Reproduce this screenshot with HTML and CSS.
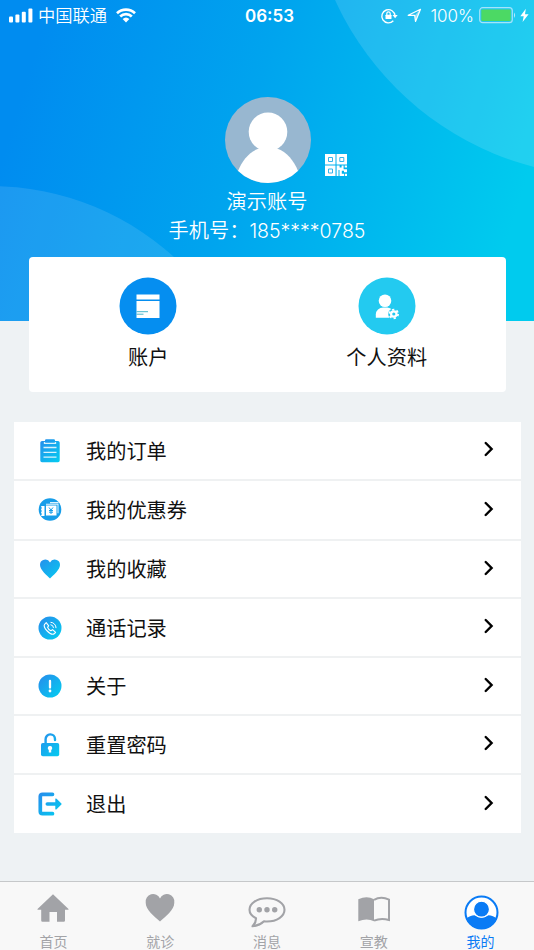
FILE: index.html
```html
<!DOCTYPE html>
<html lang="zh-CN">
<head>
    <meta charset="UTF-8">
    <meta name="viewport" content="width=device-width, initial-scale=1.0">
    <title>我的</title>
    <link rel="stylesheet" href="styles.css">
</head>
<body>
    <!-- shared icon gradient -->
    <svg class="defs" width="0" height="0">
        <defs>
            <linearGradient id="blue" x1="0" y1="0" x2="24" y2="24" gradientUnits="userSpaceOnUse">
                <stop offset="0.1" stop-color="#2590ec"/>
                <stop offset="0.9" stop-color="#05caf0"/>
            </linearGradient>
        </defs>
    </svg>

    <header class="header">
        <svg class="header-bg" viewBox="0 0 534 321">
            <circle cx="609.5" cy="-125" r="301.6"/>
            <circle class="dim" cx="-10" cy="460" r="274"/>
        </svg>

        <div class="status">
            <div class="status-left">
                <svg width="24" height="15" viewBox="0 0 24 15" fill="#fff">
                    <rect x="0" y="8.5" width="4" height="6" rx="1"/>
                    <rect x="6.4" y="6.5" width="4" height="8" rx="1"/>
                    <rect x="12.8" y="3.8" width="4" height="10.7" rx="1"/>
                    <rect x="19.4" y="0.6" width="4" height="13.9" rx="1"/>
                </svg>
                <span class="carrier">中国联通</span>
                <svg width="20" height="15" viewBox="0 0 20 15">
                    <path d="M1 5.2a13 13 0 0 1 18 0M4.2 8.5a8.3 8.3 0 0 1 11.6 0" fill="none" stroke="#fff" stroke-width="2.7"/>
                    <path d="M6.6 11a5 5 0 0 1 6.8 0L10 14.5z" fill="#fff"/>
                </svg>
            </div>
            <div class="time">06:53</div>
            <div class="status-right">
                <svg width="17" height="16" viewBox="0 0 17 16">
                    <path d="M12.3 12.7a6.6 6.6 0 1 1 1.7-5" fill="none" stroke="#fff" stroke-width="1.4"/>
                    <path d="M11.5 7h5.2l-2.6 3.2z" fill="#fff"/>
                    <rect x="4.5" y="6.7" width="6" height="4.3" rx="0.6" fill="#fff"/>
                    <path d="M5.8 7V5.6a1.7 1.7 0 0 1 3.4 0V7" fill="none" stroke="#fff" stroke-width="1.2"/>
                </svg>
                <svg class="arrow" width="15" height="15" viewBox="0 0 15 15">
                    <path d="M1.2 7.3L13.5 1.3L8.5 13.5L7.7 7.4z" fill="none" stroke="#fff" stroke-width="1.2" stroke-linejoin="round"/>
                    <path d="M13.5 1.3L7.7 7.4L8.5 13.5z" fill="#fff" opacity="0.5"/>
                </svg>
                <span class="percent">100%</span>
                <svg class="battery" width="38" height="17" viewBox="0 0 38 17">
                    <rect x="0.7" y="0.7" width="32.6" height="15" rx="3" fill="none" stroke="#a5e4fa" stroke-width="1.2"/>
                    <rect x="2.3" y="2.4" width="29.4" height="11.6" rx="1" fill="#4cd964"/>
                    <path d="M35 5.5q2.2 2.7 0 5.4z" fill="#b5e9fb"/>
                </svg>
                <svg width="9" height="15" viewBox="0 0 9 15"><path d="M5.8 0.8L0.3 8.2h3.4L2.6 14L8.6 6.3H5z" fill="#fff"/></svg>
            </div>
        </div>

        <div class="profile">
            <svg class="avatar" viewBox="0 0 86 86">
                <clipPath id="face"><circle cx="43" cy="43" r="43"/></clipPath>
                <g clip-path="url(#face)">
                    <rect width="86" height="86" fill="#98b7d0"/>
                    <circle cx="43" cy="34.8" r="19.3" fill="#fff"/>
                    <path d="M34 51.5C24 55 17 64 13 74V86H73V74C69 64 62 55 52 51.5z" fill="#fff"/>
                </g>
            </svg>
            <svg class="qr" viewBox="0 0 22 22">
                <path d="M0 0h10.5v10.5H0zM11.5 0H22v10.5H11.5zM0 11.5h10.5V22H0z" fill="#fff"/>
                <path d="M3.5 3.5h4v4h-4zM14.8 3.5h4v4h-4zM3.5 15h4v4h-4z" fill="#fff" stroke="#35b5ec" stroke-width="1"/>
                <path d="M11.6 11.6h3v2h2v-2h2v3.6H22v3h-3v-1.5h-2.2v3H19V22h-4.5v-6h-1V22h-1.9z" fill="#fff"/>
                <path d="M19.7 11.6H22v2h-2.3zM19.8 19.8H22V22h-2.2z" fill="#fff"/>
            </svg>
            <div class="name">演示账号</div>
            <div class="phone">手机号：<span>185****0785</span></div>
        </div>
    </header>

    <section class="card">
        <a class="card-item">
            <svg width="58" height="58" viewBox="0 0 58 58">
                <circle cx="29" cy="29" r="28.5" fill="#058ef0"/>
                <path d="M17.5 17.6h23v5h-23zM17.5 24h23v17h-23z" fill="#fff"/>
                <path d="M17.5 34.7h11.5M17.5 37.2h7" stroke="#48b5c9" stroke-width="1"/>
            </svg>
            <span>账户</span>
        </a>
        <a class="card-item">
            <svg width="58" height="58" viewBox="0 0 58 58">
                <circle cx="29" cy="29" r="28.5" fill="#23caf0"/>
                <circle cx="27" cy="23.7" r="6.3" fill="#fff"/>
                <path d="M17.8 40.8v-3.3a7.5 7 0 0 1 7.5-7h4a7.5 7 0 0 1 5 2.2l-2.5 8.1z" fill="#fff"/>
                <circle cx="35.8" cy="37" r="5.6" fill="#23caf0"/>
                <circle cx="35.8" cy="37" r="4.3" fill="none" stroke="#fff" stroke-width="1.8" stroke-dasharray="2.25 2.25"/>
                <circle cx="35.8" cy="37" r="2.7" fill="none" stroke="#fff" stroke-width="2.2"/>
            </svg>
            <span>个人资料</span>
        </a>
    </section>

    <nav class="menu">
        <a class="row">
            <svg class="icon" viewBox="0 0 24 24">
                <path d="M4 2h3V1.5A1.2 1.2 0 0 1 8.2.3h7.6A1.2 1.2 0 0 1 17 1.5V2h3A1.7 1.7 0 0 1 21.7 3.5v18a1.7 1.7 0 0 1-1.7 1.7H4a1.7 1.7 0 0 1-1.7-1.7v-18A1.7 1.7 0 0 1 4 2z" fill="url(#blue)"/>
                <path d="M6.5 3v1.3h11V3M5.5 8.5h13M5.5 13.4h13M5.5 18.2h13" fill="none" stroke="#d9f3fd" stroke-width="1.3"/>
            </svg>
            <span class="label">我的订单</span>
            <svg class="chevron" viewBox="0 0 10 16"><path d="M1.7 2L7.6 8L1.7 14"/></svg>
        </a>
        <a class="row tall">
            <svg class="icon" viewBox="0 0 24 24">
                <circle cx="12" cy="11.5" r="11.3" fill="#169de9"/>
                <path d="M3 8h3.5v10H3l.8-2-.8-1.5.8-1.5-.8-1.5.8-1.5z" fill="#fff"/>
                <path d="M8 7.5h10.5v10H8z" fill="#fff"/>
                <path d="M8 6.2h12v9M12 4.6h8.5" fill="none" stroke="#dff3fd" stroke-width="1.1"/>
                <path d="M11 9.5l2 2.5l2-2.5M13 12v4M11 12.5h4M11 14.2h4" fill="none" stroke="#169de9" stroke-width="1"/>
            </svg>
            <span class="label">我的优惠券</span>
            <svg class="chevron" viewBox="0 0 10 16"><path d="M1.7 2L7.6 8L1.7 14"/></svg>
        </a>
        <a class="row">
            <svg class="icon" viewBox="0 0 24 24">
                <path d="M12 21.5C9 18.5 2 12.8 2 8a5.3 5.3 0 0 1 10-2.5A5.3 5.3 0 0 1 22 8c0 4.8-7 10.5-10 13.5z" fill="url(#blue)"/>
            </svg>
            <span class="label">我的收藏</span>
            <svg class="chevron" viewBox="0 0 10 16"><path d="M1.7 2L7.6 8L1.7 14"/></svg>
        </a>
        <a class="row">
            <svg class="icon" viewBox="0 0 24 24">
                <circle cx="12" cy="12" r="11.5" fill="url(#blue)"/>
                <path d="M8.2 6.7L6.6 8.3c-.8 1.2 0 4 2.6 6.7s5.6 3.8 7 2.8l1.4-1.5-3-2.7-1.7 1.2c-1.3-.5-2.9-2.2-3.3-3.4l1.1-1.6z" fill="none" stroke="#fff" stroke-width="1.1" stroke-linejoin="round"/>
                <path d="M12.5 8.7a3.5 3.5 0 0 1 3 3.2M12.5 6.3a5.6 5.6 0 0 1 5.5 5.8" fill="none" stroke="#fff" stroke-width="1"/>
            </svg>
            <span class="label">通话记录</span>
            <svg class="chevron" viewBox="0 0 10 16"><path d="M1.7 2L7.6 8L1.7 14"/></svg>
        </a>
        <a class="row">
            <svg class="icon" viewBox="0 0 24 24">
                <circle cx="12" cy="12" r="11.5" fill="url(#blue)"/>
                <path d="M12 7v6.5" stroke="#fff" stroke-width="2.3" stroke-linecap="round"/>
                <circle cx="12" cy="17" r="1.4" fill="#fff"/>
            </svg>
            <span class="label">关于</span>
            <svg class="chevron" viewBox="0 0 10 16"><path d="M1.7 2L7.6 8L1.7 14"/></svg>
        </a>
        <a class="row">
            <svg class="icon" viewBox="0 0 24 24">
                <path d="M7.6 11V6.2a4.7 4.7 0 0 1 9.4-.2v1" fill="none" stroke="url(#blue)" stroke-width="2.4" stroke-linecap="round"/>
                <rect x="3" y="10" width="18.2" height="13.3" rx="1.8" fill="url(#blue)"/>
                <path d="M12 13a2.1 2.1 0 0 1 1.2 3.9v2.6h-2.4v-2.6A2.1 2.1 0 0 1 12 13z" fill="#fff"/>
            </svg>
            <span class="label">重置密码</span>
            <svg class="chevron" viewBox="0 0 10 16"><path d="M1.7 2L7.6 8L1.7 14"/></svg>
        </a>
        <a class="row">
            <svg class="icon" viewBox="0 0 24 24">
                <path d="M14.5 2.3H4.5Q2.3 2.3 2.3 4.5V19.5Q2.3 21.7 4.5 21.7H14.5" fill="none" stroke="url(#blue)" stroke-width="3.7" stroke-linecap="round"/>
                <path d="M9.3 10.2h8V6.8q.5-.8 1.3 0l4.8 4.7q.5.5 0 1l-4.8 4.7q-.8.8-1.3 0v-3.4h-8a1.8 1.8 0 0 1 0-3.6z" fill="url(#blue)"/>
            </svg>
            <span class="label">退出</span>
            <svg class="chevron" viewBox="0 0 10 16"><path d="M1.7 2L7.6 8L1.7 14"/></svg>
        </a>
    </nav>

    <footer class="tabs">
        <a class="tab">
            <svg viewBox="0 0 40 36">
                <path d="M20 3.2L35.5 18v.8H32v10.7a1.3 1.3 0 0 1-1.3 1.3H24V21h-7.5v9.800H9.5a1.3 1.3 0 0 1-1.3-1.3V18.800H4.5V18z" fill="#a2a3a7"/>
            </svg>
            <span>首页</span>
        </a>
        <a class="tab">
            <svg viewBox="0 0 40 36">
                <path d="M20 30.5C14.5 25.5 5.7 19 5.7 11.7A7.5 7.5 0 0 1 20 7.6A7.5 7.5 0 0 1 34.3 11.7C34.3 19 25.5 25.5 20 30.5z" fill="#a2a3a7"/>
            </svg>
            <span>就诊</span>
        </a>
        <a class="tab">
            <svg viewBox="0 0 40 36">
                <path d="M9 27.3C4.5 25 2.5 22.3 2.5 18.8C2.5 12.3 10 7.2 20 7.2S37.5 12.3 37.5 18.8S30 30.5 20 30.5c-1 0-2-.1-3-.2C14 33.2 9.5 35 5.5 35.3C7.8 33 9.2 30.5 9 27.3z" fill="none" stroke="#a2a3a7" stroke-width="2.1" stroke-linejoin="round"/>
                <g fill="#a2a3a7"><circle cx="12.3" cy="18.8" r="2.7"/><circle cx="20" cy="18.8" r="2.7"/><circle cx="27.7" cy="18.8" r="2.7"/></g>
            </svg>
            <span>消息</span>
        </a>
        <a class="tab">
            <svg viewBox="0 0 40 36">
                <path d="M4.3 8.3Q13 4 20 8.3V30.3Q13 26.8 4.3 30.3z" fill="#a2a3a7"/>
                <path d="M20 8.8Q27 4.8 35 8.6V29Q27 26.5 20 29.7" fill="none" stroke="#a2a3a7" stroke-width="2"/>
            </svg>
            <span>宣教</span>
        </a>
        <a class="tab active">
            <svg viewBox="0 0 40 36">
                <clipPath id="me"><circle cx="20.5" cy="21.5" r="16.5"/></clipPath>
                <circle cx="20.5" cy="21.5" r="16" fill="#fff" stroke="#0a7bf5" stroke-width="2"/>
                <g clip-path="url(#me)" fill="#0a7bf5">
                    <path d="M3 38V29Q9 24.3 13.5 24.3Q20.5 29 27.5 24.3Q32 24.3 38 29V38z"/>
                    <circle cx="20.5" cy="18.2" r="8" stroke="#fff" stroke-width="1.2"/>
                </g>
            </svg>
            <span>我的</span>
        </a>
    </footer>
</body>
</html>
```
FILE: styles.css
```css
* {
    box-sizing: border-box;
}
body {
    margin: 0;
    height: 950px;
    display: flex;
    flex-direction: column;
    overflow: hidden;
    background-color: #eef2f4;
    color: #111;
    font-family: Inter, "Noto Sans CJK SC", sans-serif;
    font-size: 20.2px;
}
svg {
    display: block;
    flex: none;
    overflow: visible;
}
.defs {
    position: absolute;
}

/* header */
.header {
    position: relative;
    height: 321px;
    flex: none;
    color: #fff;
    font-weight: 350;
    background: linear-gradient(107deg, #008cf0 8%, #00a4ee 45%, #00cbee 92%);
}
.header-bg {
    position: absolute;
    left: 0;
    top: 0;
    width: 100%;
    height: 100%;
    overflow: hidden;
    fill: rgba(255, 255, 255, 0.13);
}
.header-bg .dim {
    fill: rgba(255, 255, 255, 0.11);
}
.status {
    position: relative;
    display: grid;
    grid-template-columns: 1fr auto 1fr;
    align-items: center;
    height: 30px;
    padding: 0 5px 0 9px;
    font-size: 17px;
}
.status-left,
.status-right {
    display: flex;
    align-items: center;
}
.status-right {
    justify-content: flex-end;
}
.carrier {
    margin: 1px 9px 0 5px;
    font-size: 17.3px;
    line-height: 30px;
}
.time {
    padding-left: 1px;
    font-size: 17px;
    font-weight: 600;
}
.arrow {
    margin-left: 9px;
}
.percent {
    margin: 0 5px 0 8px;
}
.battery {
    margin-right: 3px;
}

.profile {
    position: relative;
    display: flex;
    flex-direction: column;
    align-items: center;
    padding-top: 67px;
}
.avatar {
    width: 86px;
    height: 86px;
    margin-left: 1px;
}
.qr {
    position: absolute;
    left: 325px;
    top: 124px;
    width: 22px;
    height: 22px;
}
.name {
    margin-top: 4px;
    line-height: 30px;
}
.phone {
    line-height: 27px;
}
.phone span {
    font-size: 19.5px;
}

/* account card */
.card {
    position: relative;
    display: flex;
    flex: none;
    height: 135px;
    margin: -64px 28px 0 29px;
    padding-top: 20px;
    border-radius: 4px;
    background-color: #fff;
}
.card-item {
    flex: 1;
    display: flex;
    flex-direction: column;
    align-items: center;
}
.card-item span {
    margin-top: 8px;
    line-height: 30px;
}

/* menu list */
.menu {
    flex: none;
    margin: 30px 13px 0 14px;
    background-color: #fff;
}
.row {
    display: flex;
    align-items: center;
    height: 58.5px;
    padding: 1px 27px 0 24px;
    border-bottom: 2px solid #eff1f2;
}
.row.tall {
    height: 60px;
}
.row:last-child {
    height: 58px;
    border-bottom: none;
}
.icon {
    width: 24px;
    height: 24px;
}
.label {
    flex: 1;
    margin: 2px 0 0 24px;
    line-height: 30px;
}
.chevron {
    width: 10px;
    height: 16px;
    margin-top: -3px;
    fill: none;
    stroke: #000;
    stroke-width: 2.4;
    stroke-linecap: round;
}

/* tab bar */
.tabs {
    display: flex;
    flex: none;
    height: 69px;
    margin-top: auto;
    border-top: 1px solid #c6c8ca;
    background-color: #f8f8f8;
    color: #a2a3a7;
    font-size: 14px;
}
.tab {
    flex: 1;
    display: flex;
    flex-direction: column;
    align-items: center;
    padding-top: 9px;
}
.tab svg {
    width: 40px;
    height: 36px;
}
.tab span {
    margin-top: 4px;
    line-height: 21px;
}
.tab.active {
    color: #0a7bf5;
}
```
